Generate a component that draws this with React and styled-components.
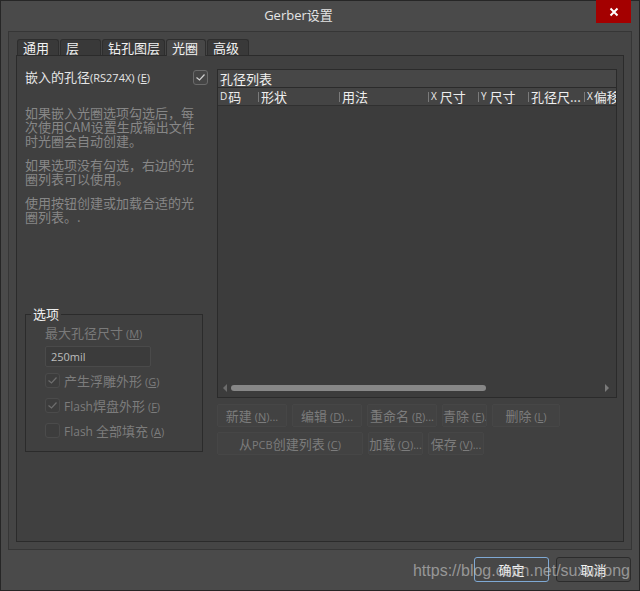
import React from 'react';
import styled, { createGlobalStyle } from 'styled-components';

const GlobalStyle = createGlobalStyle`
  html, body {
    margin: 0;
    padding: 0;
    background: #4a4a4a;
  }
  body {
    font-family: "Noto Sans CJK SC", "Noto Sans", sans-serif;
    font-size: 13px;
  }
`;

const Window = styled.div`
  position: relative;
  width: 640px;
  height: 591px;
  box-sizing: border-box;
  border: 1px solid #262626;
  background: #4a4a4a;
  display: flex;
  flex-direction: column;
`;

const TitleBar = styled.div`
  height: 30px;
  display: flex;
  align-items: flex-start;
`;

const Title = styled.div`
  flex: 1;
  text-align: center;
  line-height: 29px;
  color: #e4e4e4;
  font-size: 13px;
  font-family: "Open Sans", "Noto Sans CJK SC", sans-serif;
`;

const CloseButton = styled.div`
  width: 35px;
  height: 23px;
  margin-top: -1px;
  margin-right: 8px;
  background: #a40000;
  display: flex;
  align-items: center;
  justify-content: center;
`;

const Frame = styled.div`
  margin: 0 7px;
  height: 519px;
  box-sizing: border-box;
  border: 1px solid #363636;
  background: #454545;
  padding: 7px;
  display: flex;
  flex-direction: column;
`;

const TabRow = styled.div`
  height: 16px;
  display: flex;
  gap: 1px;
  padding-left: 1px;
`;

const Tab = styled.div`
  box-sizing: border-box;
  width: ${p => p.w}px;
  height: ${p => (p.active ? 17 : 16)}px;
  padding-left: 5px;
  background: ${p => (p.active ? '#474747' : '#393939')};
  border: 1px solid #2e2e2e;
  border-bottom: none;
  border-radius: 3px 3px 0 0;
  color: #f2f2f2;
  font-size: 13px;
  line-height: 15px;
  white-space: nowrap;
  position: relative;
  z-index: ${p => (p.active ? 1 : 0)};
`;

const Content = styled.div`
  flex: 1;
  box-sizing: border-box;
  border: 1px solid #2b2b2b;
  background: #404040;
  padding: 13px 6px 0 8px;
  display: grid;
  grid-template-columns: 185px 400px;
  column-gap: 7px;
  align-items: start;
`;

const LeftCol = styled.div`
  display: flex;
  flex-direction: column;
`;

const HeaderRow = styled.div`
  height: 16px;
  display: flex;
  align-items: center;
  justify-content: space-between;
  padding-right: 2px;
`;

const Label = styled.span`
  color: #e6e6e6;
  font-size: 13px;
  line-height: 16px;
  white-space: nowrap;
`;

const Small = styled.span`
  font-family: "Open Sans", "Noto Sans", sans-serif;
  font-size: 11px;
  u {
    text-decoration: underline;
  }
`;

const Box = styled.span`
  box-sizing: border-box;
  width: ${p => p.size}px;
  height: ${p => p.size}px;
  border: 1px solid ${p => (p.dim ? '#4b4b4b' : '#6a6a6a')};
  border-radius: 3px;
  background: ${p => (p.dim ? '#3d3d3d' : '#454545')};
  display: inline-flex;
  align-items: center;
  justify-content: center;
  flex-shrink: 0;
`;

const Desc = styled.div`
  margin-top: 21px;
  color: #878787;
  font-size: 13px;
`;

const Para = styled.div`
  line-height: 14px;
  margin-bottom: 10px;
  white-space: nowrap;
`;

const Group = styled.fieldset`
  margin: 73px 0 0 0;
  width: 178px;
  height: 145px;
  box-sizing: border-box;
  border: 1px solid #2b2b2b;
  padding: 0;
`;

const Legend = styled.legend`
  margin-left: 5px;
  padding: 0 2px;
  color: #f0f0f0;
  font-size: 13px;
  line-height: 14px;
`;

const GroupBody = styled.div`
  padding-left: 19px;
`;

const FieldLabel = styled.div`
  margin-top: 4px;
  color: #7a7a7a;
  font-size: 13px;
  line-height: 16px;
  white-space: nowrap;
`;

const Input = styled.div`
  margin-top: 4px;
  width: 106px;
  height: 21px;
  box-sizing: border-box;
  border: 1px solid #4a4a4a;
  border-radius: 2px;
  background: #3b3b3b;
  color: #bdbdbd;
  font-family: "Open Sans", "Noto Sans", sans-serif;
  font-size: 11px;
  line-height: 19px;
  padding-left: 5px;
`;

const CheckRow = styled.div`
  margin-top: ${p => p.top}px;
  height: 15px;
  display: flex;
  align-items: center;
  gap: 4px;
  color: #7c7c7c;
  white-space: nowrap;
`;

const Latin = styled.span`
  font-family: "Open Sans", "Noto Sans", sans-serif;
  font-size: 12px;
`;

const RightCol = styled.div`
  display: flex;
  flex-direction: column;
`;

const Table = styled.div`
  height: 329px;
  box-sizing: border-box;
  border: 1px solid #2b2b2b;
  background: #3c3c3c;
  display: flex;
  flex-direction: column;
`;

const TableTitle = styled.div`
  height: 17px;
  border-bottom: 1px solid #2b2b2b;
  background: #474747;
  color: #f0f0f0;
  font-size: 13px;
  line-height: 17px;
  padding-left: 2px;
`;

const HeadRow = styled.div`
  height: 17px;
  border-bottom: 1px solid #303030;
  background: #444444;
  display: flex;
  overflow: hidden;
`;

const HeadCell = styled.div`
  width: ${p => p.w}px;
  flex-shrink: 0;
  box-sizing: border-box;
  display: flex;
  align-items: center;
  color: #eeeeee;
  font-size: 13px;
  line-height: 17px;
  white-space: nowrap;
  padding-left: 2px;
  &::before {
    content: '';
    display: ${p => (p.first ? 'none' : 'block')};
    width: 1px;
    height: 10px;
    background: #7a7a7a;
    margin: 0 2px 0 -2px;
  }
`;

const Tiny = styled.span`
  font-family: "Open Sans", "Noto Sans", sans-serif;
  font-size: 10px;
  margin-right: ${p => (p.gap ? 3 : 1)}px;
`;

const TableBody = styled.div`
  flex: 1;
`;

const ScrollRow = styled.div`
  height: 15px;
  display: flex;
  align-items: center;
  padding: 0 7px 2px 5px;
  gap: 4px;
`;

const Arrow = styled.span`
  width: 0;
  height: 0;
  border-top: 4px solid transparent;
  border-bottom: 4px solid transparent;
  ${p => (p.dir === 'left'
    ? 'border-right: 4px solid #6c6c6c;'
    : 'border-left: 4px solid #7a7a7a;')}
`;

const Track = styled.div`
  flex: 1;
  display: flex;
`;

const Thumb = styled.div`
  width: 255px;
  height: 6px;
  border-radius: 3px;
  background: #878787;
`;

const ButtonRow = styled.div`
  margin-top: ${p => p.top}px;
  display: flex;
  gap: 5px;
`;

const Button = styled.div`
  width: ${p => p.w}px;
  height: 23px;
  box-sizing: border-box;
  border: 1px solid #464646;
  border-radius: 2px;
  background: #424242;
  color: #7c7c7c;
  font-size: 13px;
  line-height: 21px;
  text-align: center;
  white-space: nowrap;
  overflow: hidden;
`;

const BottomBar = styled.div`
  flex: 1;
  display: flex;
  justify-content: flex-end;
  gap: 7px;
  padding: 7px 8px 0 0;
`;

const DialogButton = styled.div`
  width: ${p => p.w}px;
  height: 25px;
  box-sizing: border-box;
  border: 1px solid ${p => (p.primary ? '#7fa9d4' : '#2c2c2c')};
  border-radius: 3px;
  background: #474747;
  color: #f2f2f2;
  font-size: 13px;
  line-height: 23px;
  text-align: center;
`;

const Watermark = styled.div`
  position: absolute;
  right: 9px;
  bottom: 10px;
  font-family: "Liberation Sans", Arial, sans-serif;
  font-size: 16px;
  color: rgba(205, 205, 205, 0.6);
  pointer-events: none;
  white-space: nowrap;
`;

const Check = ({ color }) => (
  <svg width="11" height="11" viewBox="0 0 11 11">
    <polyline points="1.5,5.5 4.5,8 9.5,2.5" fill="none" stroke={color} strokeWidth="1.2" />
  </svg>
);

const tabs = [
  { label: '通用', w: 42 },
  { label: '层', w: 41 },
  { label: '钻孔图层', w: 63 },
  { label: '光圈', w: 40, active: true },
  { label: '高级', w: 42 },
];

export default function App() {
  return (
    <>
      <GlobalStyle />
      <Window>
        <TitleBar>
          <Title>Gerber设置</Title>
          <CloseButton>
            <svg width="10" height="10" viewBox="0 0 10 10">
              <path d="M1.5 1.5 L8.5 8.5 M8.5 1.5 L1.5 8.5" stroke="#ffffff" strokeWidth="2" />
            </svg>
          </CloseButton>
        </TitleBar>
        <Frame>
          <TabRow>
            {tabs.map(t => (
              <Tab key={t.label} w={t.w} active={t.active}>{t.label}</Tab>
            ))}
          </TabRow>
          <Content>
            <LeftCol>
              <HeaderRow>
                <Label>嵌入的孔径<Small>(RS274X) (<u>E</u>)</Small></Label>
                <Box size={15}><Check color="#d0d0d0" /></Box>
              </HeaderRow>
              <Desc>
                <Para>如果嵌入光圈选项勾选后，每<br />次使用CAM设置生成输出文件<br />时光圈会自动创建。</Para>
                <Para>如果选项没有勾选，右边的光<br />圈列表可以使用。</Para>
                <Para>使用按钮创建或加载合适的光<br />圈列表。.</Para>
              </Desc>
              <Group>
                <Legend>选项</Legend>
                <GroupBody>
                  <FieldLabel>最大孔径尺寸 <Small>(<u>M</u>)</Small></FieldLabel>
                  <Input>250mil</Input>
                  <CheckRow top={6}>
                    <Box size={15} dim><Check color="#6e6e6e" /></Box>
                    <span>产生浮雕外形 <Small>(<u>G</u>)</Small></span>
                  </CheckRow>
                  <CheckRow top={10}>
                    <Box size={15} dim><Check color="#6e6e6e" /></Box>
                    <span><Latin>Flash</Latin>焊盘外形 <Small>(<u>F</u>)</Small></span>
                  </CheckRow>
                  <CheckRow top={10}>
                    <Box size={15} dim />
                    <span><Latin>Flash</Latin> 全部填充 <Small>(<u>A</u>)</Small></span>
                  </CheckRow>
                </GroupBody>
              </Group>
            </LeftCol>
            <RightCol>
              <Table>
                <TableTitle>孔径列表</TableTitle>
                <HeadRow>
                  <HeadCell w={40} first><Tiny>D</Tiny>码</HeadCell>
                  <HeadCell w={81}>形状</HeadCell>
                  <HeadCell w={89}>用法</HeadCell>
                  <HeadCell w={50}><Tiny gap>X</Tiny>尺寸</HeadCell>
                  <HeadCell w={50}><Tiny gap>Y</Tiny>尺寸</HeadCell>
                  <HeadCell w={56}>孔径尺...</HeadCell>
                  <HeadCell w={60}><Tiny>X</Tiny>偏移</HeadCell>
                </HeadRow>
                <TableBody />
                <ScrollRow>
                  <Arrow dir="left" />
                  <Track><Thumb /></Track>
                  <Arrow dir="right" />
                </ScrollRow>
              </Table>
              <ButtonRow top={6}>
                <Button w={70}>新建 <Small>(<u>N</u>)...</Small></Button>
                <Button w={70}>编辑 <Small>(<u>D</u>)...</Small></Button>
                <Button w={70}>重命名 <Small>(<u>R</u>)...</Small></Button>
                <Button w={45}>青除 <Small>(<u>E</u>).</Small></Button>
                <Button w={68}>删除 <Small>(<u>L</u>)</Small></Button>
              </ButtonRow>
              <ButtonRow top={5}>
                <Button w={146}>从<Small>PCB</Small>创建列表 <Small>(<u>C</u>)</Small></Button>
                <Button w={55}>加载 <Small>(<u>O</u>)...</Small></Button>
                <Button w={56}>保存 <Small>(<u>V</u>)...</Small></Button>
              </ButtonRow>
            </RightCol>
          </Content>
        </Frame>
        <BottomBar>
          <DialogButton w={75} primary>确定</DialogButton>
          <DialogButton w={75}>取消</DialogButton>
        </BottomBar>
        <Watermark>https://blog.csdn.net/suxuqong</Watermark>
      </Window>
    </>
  );
}
